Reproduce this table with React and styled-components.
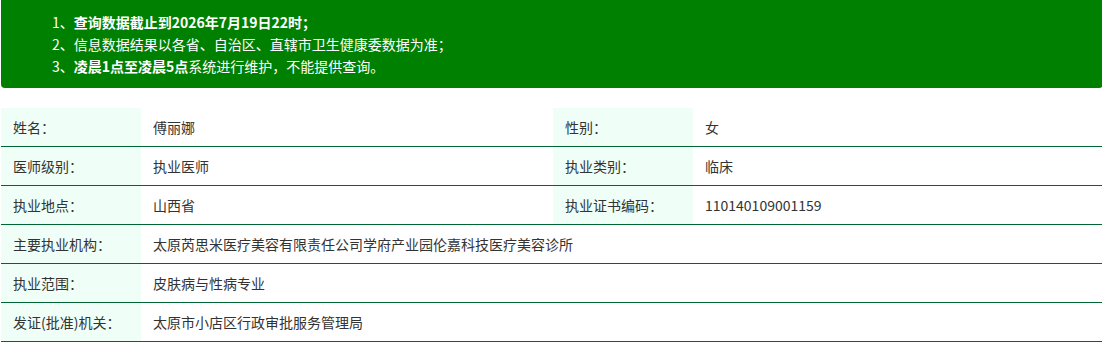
import React from "react";
import styled, { createGlobalStyle } from "styled-components";

const GlobalStyle = createGlobalStyle`
  html, body {
    margin: 0;
    padding: 0;
    background: #ffffff;
  }
  body {
    font-family: "Noto Sans CJK SC", "Open Sans", "Noto Sans", sans-serif;
    color: #333333;
  }
`;

const Page = styled.div`
  width: 1102px;
  padding-left: 1px;
  box-sizing: border-box;
`;

const Notice = styled.div`
  background-color: #008000;
  color: #ffffff;
  border-radius: 0 0 4px 4px;
  height: 88px;
  box-sizing: border-box;
  padding: 11px 0 0 51px;
  font-size: 14px;
  line-height: 22px;
  margin-right: -1px;
`;

const NoticeLine = styled.div`
  white-space: nowrap;
`;

const Strong = styled.b`
  font-weight: 700;
`;

const InfoTable = styled.div`
  margin-top: 20px;
  display: grid;
  grid-template-columns: 140px 412px 140px 1fr;
`;

const Row = styled.div`
  display: contents;
`;

const Cell = styled.div`
  height: 38px;
  border-bottom: 1px solid #006633;
  display: flex;
  align-items: center;
  padding-left: 12px;
  font-size: 14px;
  color: #333333;
  background-color: ${(p) => (p.$label ? "#effff7" : "#ffffff")};
  grid-column: ${(p) => (p.$wide ? "span 3" : "auto")};
  white-space: nowrap;
`;

const rows = [
  [["姓名：", "傅丽娜"], ["性别：", "女"]],
  [["医师级别：", "执业医师"], ["执业类别：", "临床"]],
  [["执业地点：", "山西省"], ["执业证书编码：", "110140109001159"]],
  [["主要执业机构：", "太原芮思米医疗美容有限责任公司学府产业园伦嘉科技医疗美容诊所"]],
  [["执业范围：", "皮肤病与性病专业"]],
  [["发证(批准)机关：", "太原市小店区行政审批服务管理局"]],
];

export default function App() {
  return (
    <Page>
      <GlobalStyle />
      <Notice>
        <NoticeLine>
          1、<Strong>查询数据截止到2026年7月19日22时；</Strong>
        </NoticeLine>
        <NoticeLine>2、信息数据结果以各省、自治区、直辖市卫生健康委数据为准；</NoticeLine>
        <NoticeLine>
          3、<Strong>凌晨1点至凌晨5点</Strong>系统进行维护，不能提供查询。
        </NoticeLine>
      </Notice>
      <InfoTable>
        {rows.map((row, i) => (
          <Row key={i}>
            {row.map(([label, value]) => (
              <React.Fragment key={label}>
                <Cell $label>{label}</Cell>
                <Cell $wide={row.length === 1}>{value}</Cell>
              </React.Fragment>
            ))}
          </Row>
        ))}
      </InfoTable>
    </Page>
  );
}
